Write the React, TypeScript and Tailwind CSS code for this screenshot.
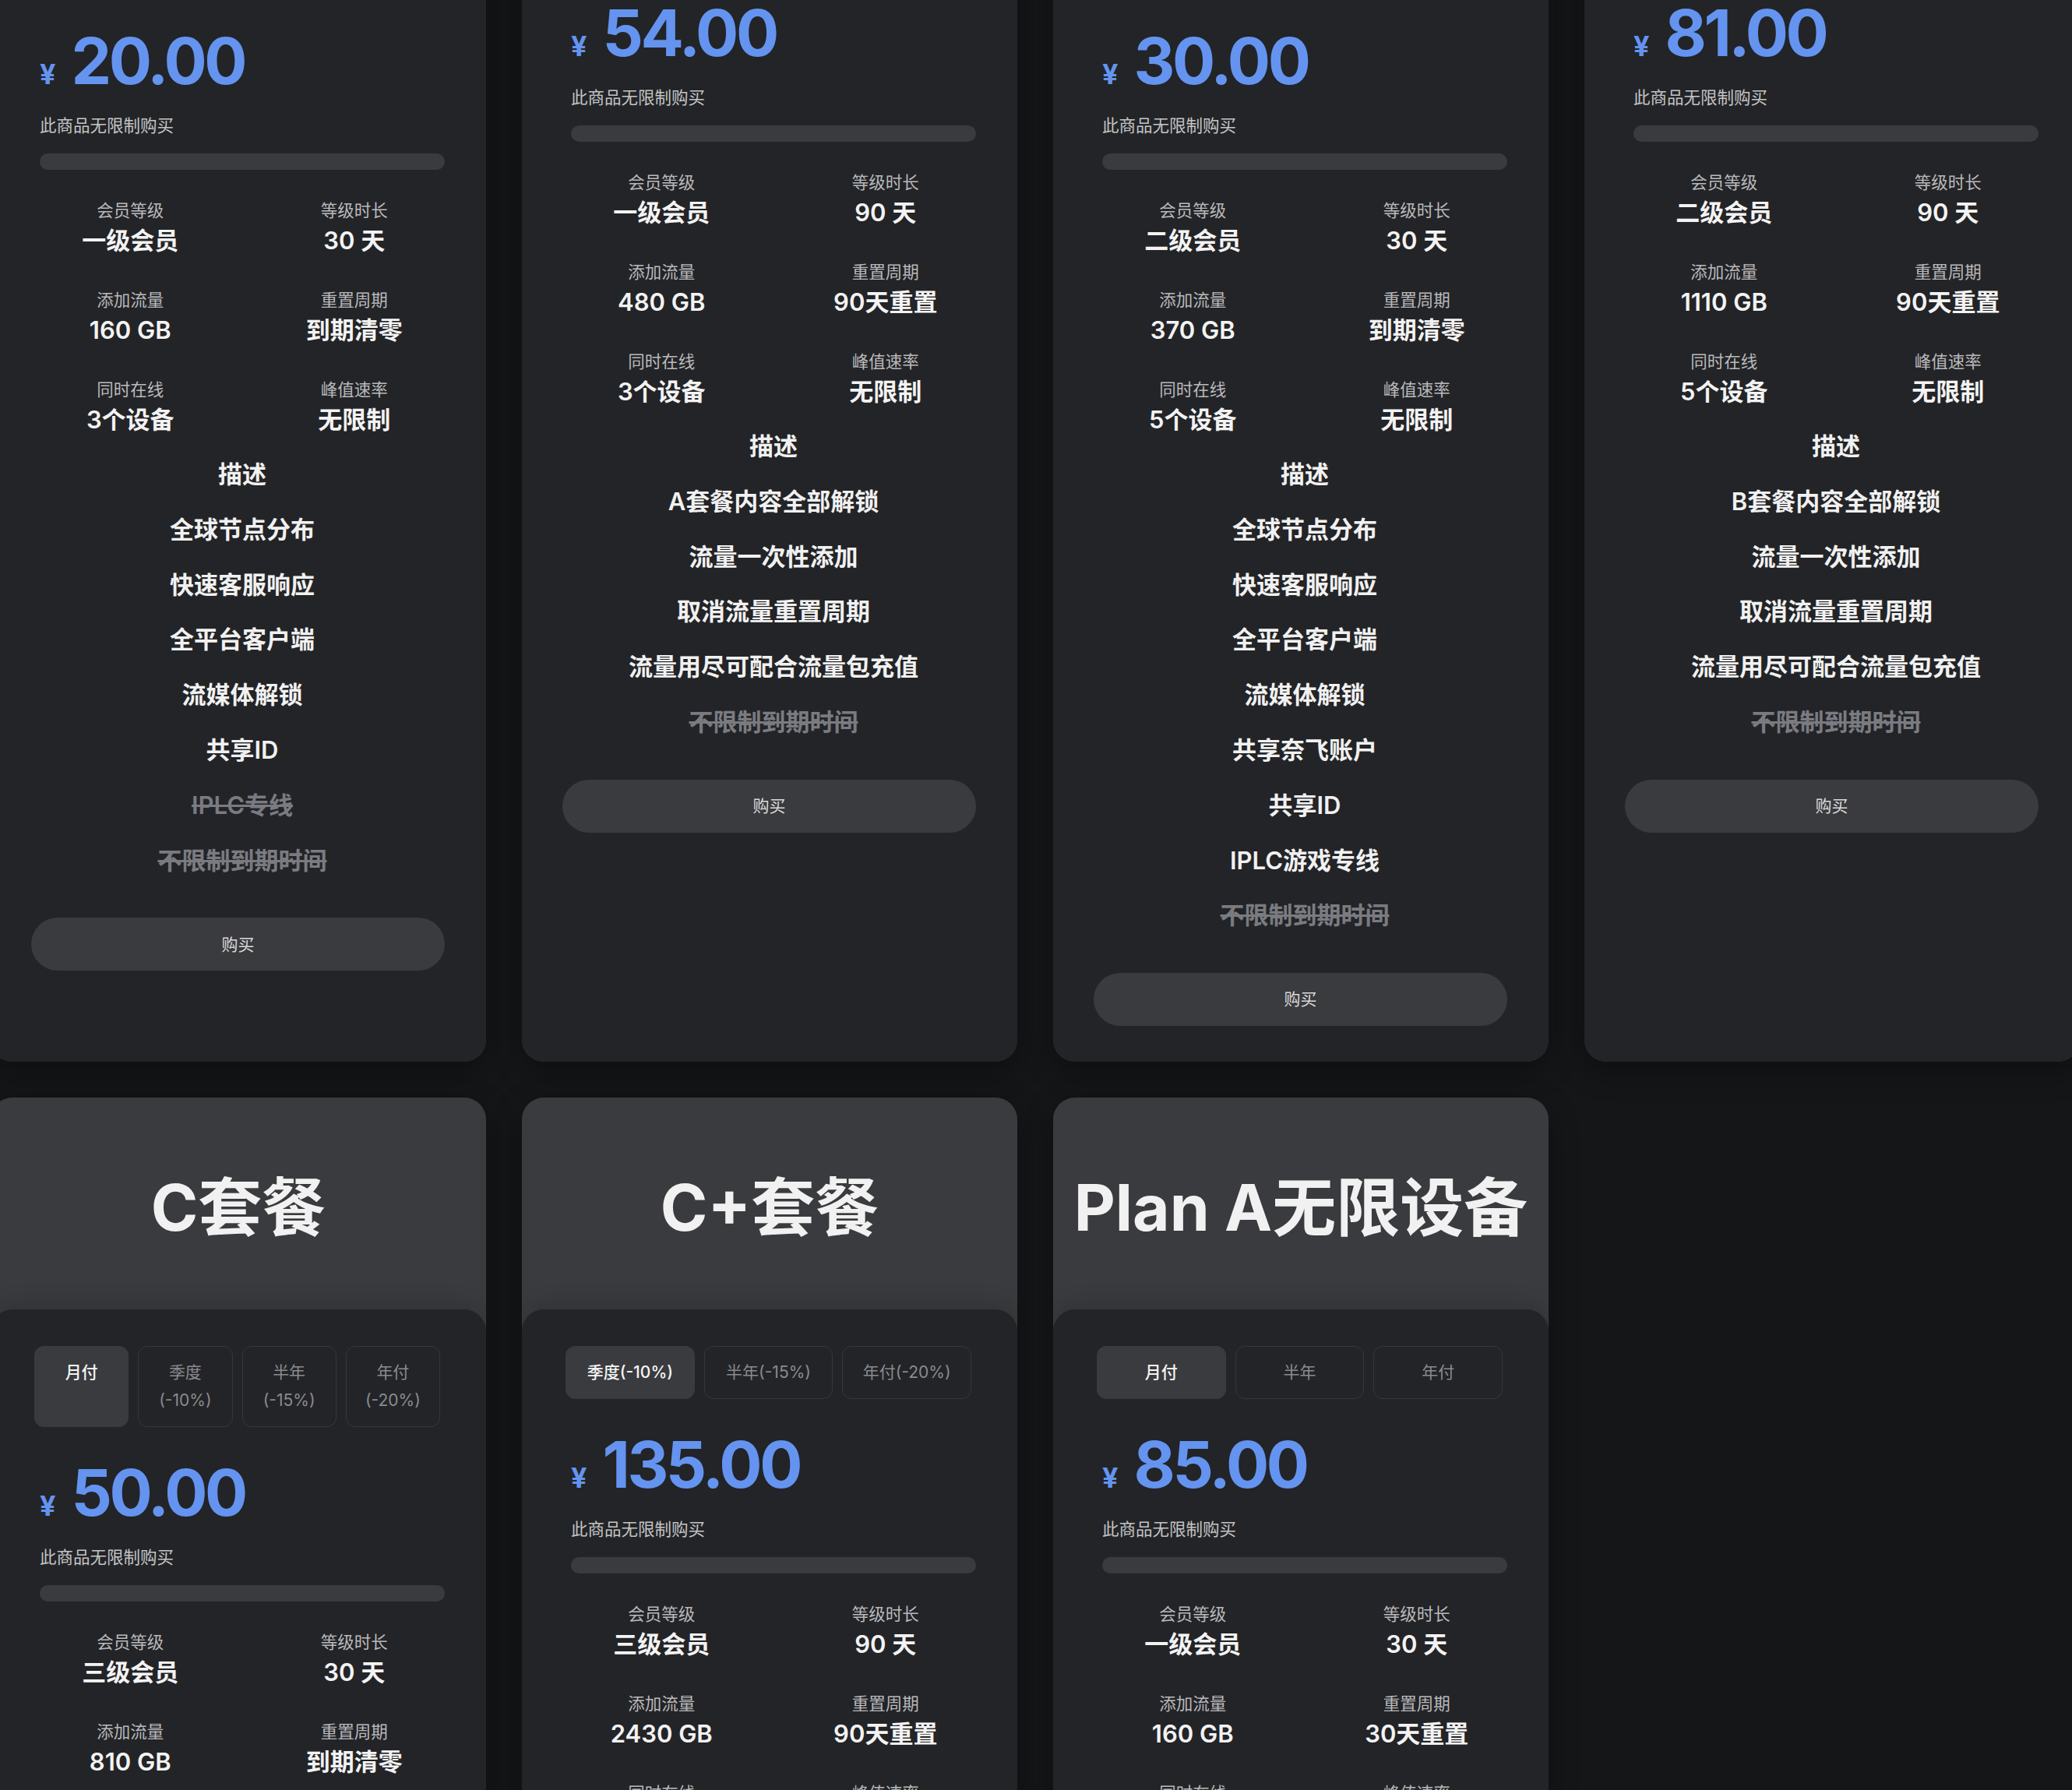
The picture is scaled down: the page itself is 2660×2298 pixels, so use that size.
import React from 'react';

interface Feature {
  text: string;
  off?: boolean;
}

interface Plan {
  title: string;
  tabs: string[];
  active: number;
  price: string;
  stats: [string, string][];
  features: Feature[];
}

const fourTabs = ['月付', '季度\n(-10%)', '半年\n(-15%)', '年付\n(-20%)'];
const threeTabs = ['季度(-10%)', '半年(-15%)', '年付(-20%)'];

const plans: Plan[] = [
  {
    title: 'A套餐',
    tabs: fourTabs,
    active: 0,
    price: '20.00',
    stats: [
      ['会员等级', '一级会员'],
      ['等级时长', '30 天'],
      ['添加流量', '160 GB'],
      ['重置周期', '到期清零'],
      ['同时在线', '3个设备'],
      ['峰值速率', '无限制'],
    ],
    features: [
      { text: '描述' },
      { text: '全球节点分布' },
      { text: '快速客服响应' },
      { text: '全平台客户端' },
      { text: '流媒体解锁' },
      { text: '共享ID' },
      { text: 'IPLC专线', off: true },
      { text: '不限制到期时间', off: true },
    ],
  },
  {
    title: 'A+套餐',
    tabs: threeTabs,
    active: 0,
    price: '54.00',
    stats: [
      ['会员等级', '一级会员'],
      ['等级时长', '90 天'],
      ['添加流量', '480 GB'],
      ['重置周期', '90天重置'],
      ['同时在线', '3个设备'],
      ['峰值速率', '无限制'],
    ],
    features: [
      { text: '描述' },
      { text: 'A套餐内容全部解锁' },
      { text: '流量一次性添加' },
      { text: '取消流量重置周期' },
      { text: '流量用尽可配合流量包充值' },
      { text: '不限制到期时间', off: true },
    ],
  },
  {
    title: 'B套餐',
    tabs: fourTabs,
    active: 0,
    price: '30.00',
    stats: [
      ['会员等级', '二级会员'],
      ['等级时长', '30 天'],
      ['添加流量', '370 GB'],
      ['重置周期', '到期清零'],
      ['同时在线', '5个设备'],
      ['峰值速率', '无限制'],
    ],
    features: [
      { text: '描述' },
      { text: '全球节点分布' },
      { text: '快速客服响应' },
      { text: '全平台客户端' },
      { text: '流媒体解锁' },
      { text: '共享奈飞账户' },
      { text: '共享ID' },
      { text: 'IPLC游戏专线' },
      { text: '不限制到期时间', off: true },
    ],
  },
  {
    title: 'B+套餐',
    tabs: threeTabs,
    active: 0,
    price: '81.00',
    stats: [
      ['会员等级', '二级会员'],
      ['等级时长', '90 天'],
      ['添加流量', '1110 GB'],
      ['重置周期', '90天重置'],
      ['同时在线', '5个设备'],
      ['峰值速率', '无限制'],
    ],
    features: [
      { text: '描述' },
      { text: 'B套餐内容全部解锁' },
      { text: '流量一次性添加' },
      { text: '取消流量重置周期' },
      { text: '流量用尽可配合流量包充值' },
      { text: '不限制到期时间', off: true },
    ],
  },
  {
    title: 'C套餐',
    tabs: fourTabs,
    active: 0,
    price: '50.00',
    stats: [
      ['会员等级', '三级会员'],
      ['等级时长', '30 天'],
      ['添加流量', '810 GB'],
      ['重置周期', '到期清零'],
      ['同时在线', '8个设备'],
      ['峰值速率', '无限制'],
    ],
    features: [
      { text: '描述' },
      { text: '全球节点分布' },
      { text: '快速客服响应' },
      { text: '全平台客户端' },
      { text: '流媒体解锁' },
      { text: '共享奈飞账户' },
      { text: '共享ID' },
      { text: 'IPLC游戏专线' },
      { text: '不限制到期时间', off: true },
    ],
  },
  {
    title: 'C+套餐',
    tabs: threeTabs,
    active: 0,
    price: '135.00',
    stats: [
      ['会员等级', '三级会员'],
      ['等级时长', '90 天'],
      ['添加流量', '2430 GB'],
      ['重置周期', '90天重置'],
      ['同时在线', '8个设备'],
      ['峰值速率', '无限制'],
    ],
    features: [
      { text: '描述' },
      { text: 'C套餐内容全部解锁' },
      { text: '流量一次性添加' },
      { text: '取消流量重置周期' },
      { text: '不限制到期时间', off: true },
    ],
  },
  {
    title: 'Plan A无限设备',
    tabs: ['月付', '半年', '年付'],
    active: 0,
    price: '85.00',
    stats: [
      ['会员等级', '一级会员'],
      ['等级时长', '30 天'],
      ['添加流量', '160 GB'],
      ['重置周期', '30天重置'],
      ['同时在线', '无限设备'],
      ['峰值速率', '无限制'],
    ],
    features: [
      { text: '描述' },
      { text: '全球节点分布' },
      { text: '不限制设备数量' },
      { text: '不限制到期时间', off: true },
    ],
  },
];

function PlanCard({ plan }: { plan: Plan }) {
  return (
    <div className="flex flex-col rounded-[28px] bg-[#3a3b3e] overflow-hidden shadow-[0_12px_36px_rgba(0,0,0,0.35)]">
      <div className="h-[272px] flex items-center justify-center pt-[12px]">
        <h2 className="text-[82px] font-bold text-[#f1f1f1] leading-none whitespace-nowrap">
          {plan.title}
        </h2>
      </div>

      <div className="flex-1 rounded-t-[28px] bg-[#232427] pt-[47px] pb-[46px] pl-[52px] pr-[53px] shadow-[0_-10px_24px_rgba(0,0,0,0.12)]">
        {/* 付款周期 */}
        <div className="flex gap-[12px] pl-[4px] pr-[6px]">
          {plan.tabs.map((tab, i) => (
            <div
              key={tab}
              className={
                i === plan.active
                  ? 'flex-1 rounded-[12px] border border-[#3a3b3e] bg-[#3a3b3e] py-[15px] text-center text-[21px] leading-[36px] font-medium text-[#f5f5f5] whitespace-pre-line'
                  : 'flex-1 rounded-[12px] border border-[#35373b] py-[15px] text-center text-[21px] leading-[36px] text-[#8a8b90] whitespace-pre-line'
              }
            >
              {tab}
            </div>
          ))}
        </div>

        <div className="ml-[11px]">
          <div className="mt-[35px] flex h-[100px] items-baseline gap-[20px] leading-[100px] text-[#6494f0] font-bold">
            <span className="text-[36px] leading-[36px]">¥</span>
            <span className="text-[82px] tracking-[-3.5px]">{plan.price}</span>
          </div>

          <p className="mt-[17px] text-[21.5px] leading-[30px] text-[#c4c4c6]">此商品无限制购买</p>

          <div className="mt-[21px] h-[21px] rounded-full bg-[#3a3b3e]" />

          <div className="mt-[37px] grid grid-cols-2 gap-x-[55px] gap-y-[40px]">
            {plan.stats.map(([label, value]) => (
              <div key={label} className="flex flex-col items-center">
                <span className="text-[21.5px] leading-[30px] text-[#b9b9bc]">{label}</span>
                <span className="mt-[3px] text-[31px] leading-[42px] font-semibold text-[#f3f3f3]">{value}</span>
              </div>
            ))}
          </div>

          <ul className="mt-[14px] flex flex-col items-center">
            {plan.features.map((f) => (
              <li
                key={f.text}
                className={
                  f.off
                    ? 'text-[31px] leading-[70.8px] font-semibold text-[#7a7b81] line-through'
                    : 'text-[31px] leading-[70.8px] font-semibold text-[#f1f1f1]'
                }
              >
                {f.text}
              </li>
            ))}
          </ul>
        </div>

        <button className="mt-[38px] h-[68px] w-full rounded-full bg-[#3a3b3e] text-[21px] text-[#d9d9db]">
          购买
        </button>
      </div>
    </div>
  );
}

export default function App() {
  return (
    <div
      className="h-[2298px] overflow-hidden bg-[#151618]"
      style={{ fontFamily: '"Inter", "Noto Sans CJK SC", sans-serif' }}
    >
      <div className="mt-[-429px] ml-[-12px] grid grid-cols-[repeat(4,636px)] gap-[46px]">
        {plans.map((plan) => (
          <PlanCard key={plan.title} plan={plan} />
        ))}
      </div>
    </div>
  );
}
